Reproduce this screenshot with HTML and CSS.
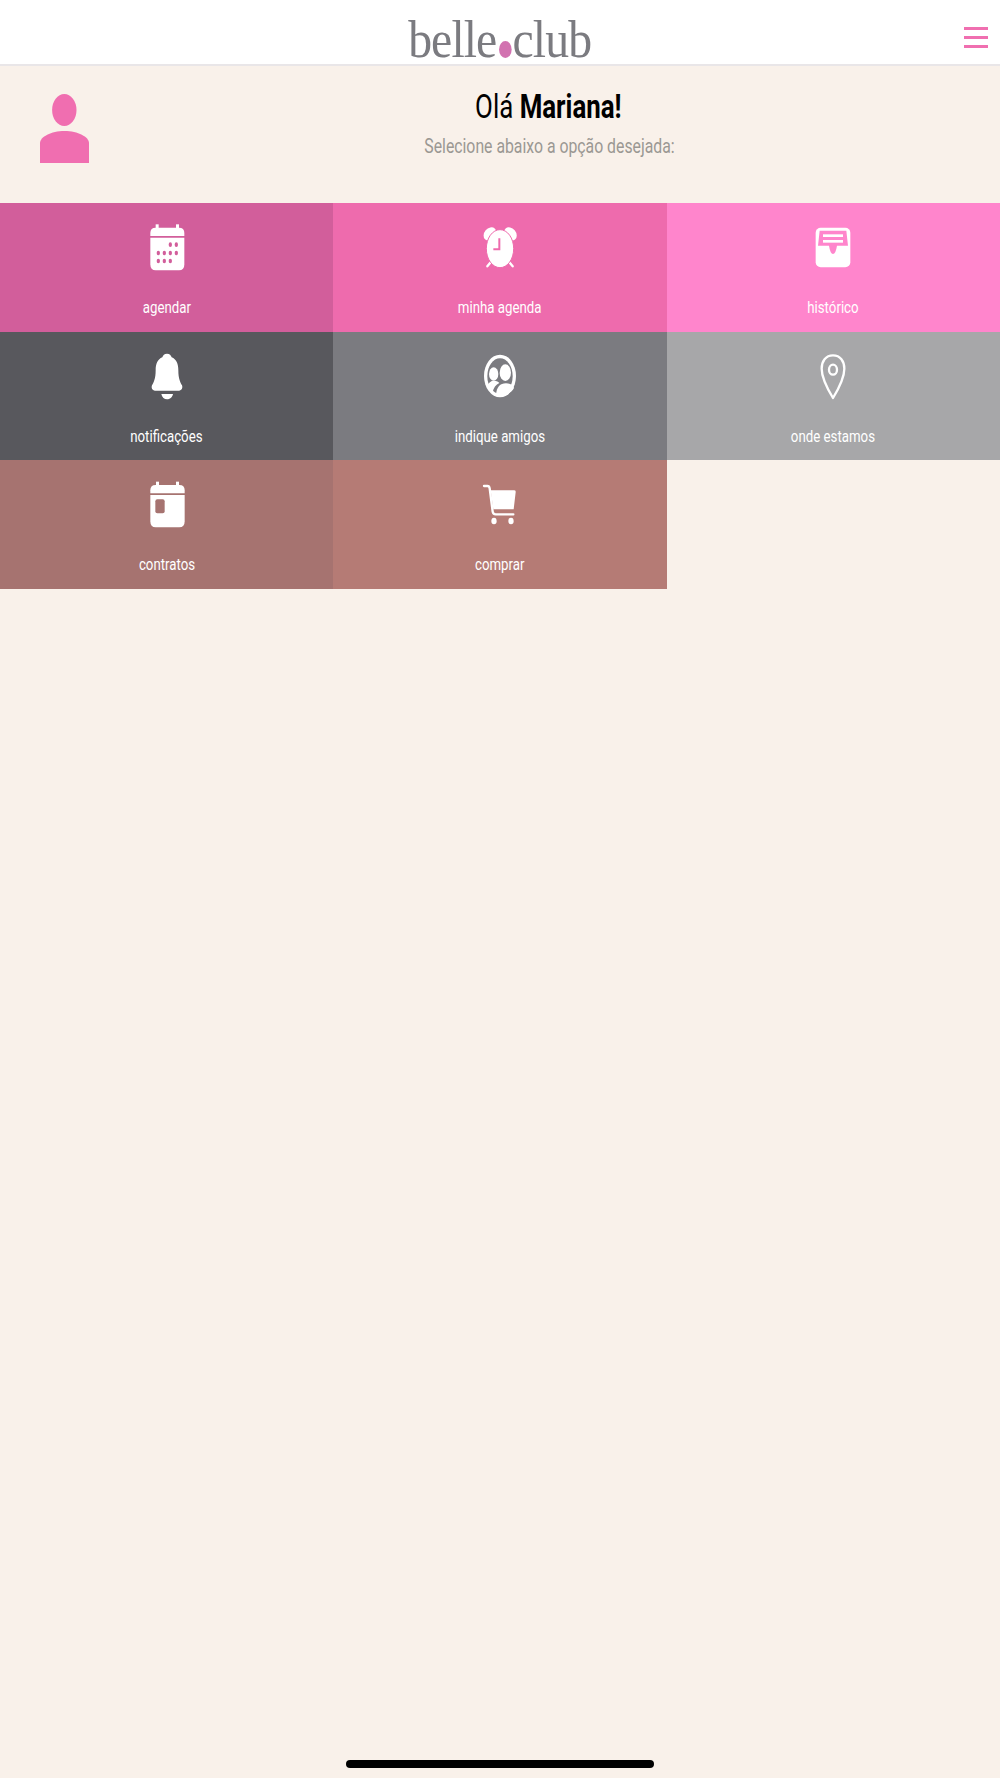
FILE: index.html
```html
<!DOCTYPE html>
<html lang="pt-BR">
<head>
    <meta charset="UTF-8">
    <meta name="viewport" content="width=device-width, initial-scale=1.0">
    <title>belle.club</title>
    <link rel="stylesheet" href="styles.css">
</head>
<body>

<div class="page">
    <header class="topbar">
        <div class="logo"><span class="logo-text">belle</span><span class="logo-dot"></span><span class="logo-text">club</span></div>
        <button class="menu-btn" aria-label="menu"><span></span><span></span><span></span></button>
    </header>

    <section class="hero">
        <svg class="avatar" viewBox="0 0 49 69" aria-hidden="true">
            <ellipse cx="24.3" cy="16" rx="12.2" ry="16"/>
            <path d="M0 69V49C0 43 11 37 24.5 37S49 43 49 49V69Z"/>
        </svg>
        <div class="hero-text">
            <h1 class="greeting"><span class="squeeze-strong">Olá <b>Mariana!</b></span></h1>
            <p class="subtitle"><span class="squeeze">Selecione abaixo a opção desejada:</span></p>
        </div>
    </section>

    <nav class="menu-grid">
        <a class="tile tile-agendar" href="#">
            <svg class="tile-icon" viewBox="110 51 180 156" aria-hidden="true">
                <rect x="166" y="58" width="9" height="16"/>
                <rect x="227" y="58" width="9" height="16"/>
                <path d="M150 93V84Q150 68 166 68H236Q252 68 252 84V93Z"/>
                <path d="M150 98H252V178Q252 196 236 196H166Q150 196 150 178Z"/>
                <g class="cut">
                    <ellipse cx="210" cy="119" rx="5" ry="7"/><ellipse cx="228" cy="119" rx="5" ry="7"/>
                    <ellipse cx="174" cy="144" rx="5" ry="7"/><ellipse cx="192" cy="144" rx="5" ry="7"/><ellipse cx="210" cy="144" rx="5" ry="7"/><ellipse cx="228" cy="144" rx="5" ry="7"/>
                    <ellipse cx="174" cy="168" rx="5" ry="7"/><ellipse cx="192" cy="168" rx="5" ry="7"/><ellipse cx="210" cy="168" rx="5" ry="7"/>
                </g>
            </svg>
            <span class="tile-label">agendar</span>
        </a>
        <a class="tile tile-agenda" href="#">
            <svg class="tile-icon" viewBox="210 51 180 156" aria-hidden="true">
                <ellipse cx="270" cy="87" rx="17" ry="22" transform="rotate(40 270 87)"/>
                <ellipse cx="331" cy="87" rx="17" ry="22" transform="rotate(-40 331 87)"/>
                <line class="line" x1="272" y1="172" x2="262" y2="184"/>
                <line class="line" x1="328" y1="172" x2="338" y2="184"/>
                <ellipse class="ring" cx="300" cy="131" rx="41" ry="57"/>
                <polyline class="hand" points="298,100 298,133 280,133"/>
            </svg>
            <span class="tile-label">minha agenda</span>
        </a>
        <a class="tile tile-historico" href="#">
            <svg class="tile-icon" viewBox="130 51 180 156" aria-hidden="true">
                <rect x="168" y="68" width="104" height="119" rx="15"/>
                <path class="cut" d="M180 77H260L265 122H232Q228 147 220 147T208 122H175Z"/>
                <rect x="190" y="88" width="60" height="8"/>
                <rect x="190" y="105" width="60" height="8"/>
            </svg>
            <span class="tile-label">histórico</span>
        </a>
        <a class="tile tile-notificacoes" href="#">
            <svg class="tile-icon" viewBox="110 47 180 156" aria-hidden="true">
                <path d="M200 55C208 55 212 60 214 66C228 72 234 85 234 105C234 130 240 142 245 150C248 158 244 166 236 166H164C156 166 152 158 155 150C160 142 166 130 166 105C166 85 172 72 186 66C188 60 192 55 200 55Z"/>
                <path d="M183 176H218C216 186 208 192 200 192C192 192 185 186 183 176Z"/>
            </svg>
            <span class="tile-label">notificações</span>
        </a>
        <a class="tile tile-amigos" href="#">
            <svg class="tile-icon" viewBox="210 47 180 156" aria-hidden="true">
                <ellipse cx="300" cy="122" rx="48" ry="64"/>
                <ellipse class="cut" cx="300" cy="122" rx="38" ry="53"/>
                <ellipse cx="281" cy="116" rx="14" ry="20"/>
                <ellipse cx="316" cy="112" rx="17" ry="25"/>
                <path d="M288 178C290 155 300 144 318 144C330 144 340 150 342 158C335 172 318 180 300 180Z"/>
                <path d="M262 152C266 142 272 136 282 136C290 136 296 140 298 143C288 148 280 158 278 170C270 166 265 160 262 152Z"/>
            </svg>
            <span class="tile-label">indique amigos</span>
        </a>
        <a class="tile tile-onde" href="#">
            <svg class="tile-icon" viewBox="130 47 180 156" aria-hidden="true">
                <path class="outline" d="M220 60C242 60 254 78 254 100C254 128 232 168 220 188C208 168 186 128 186 100C186 78 198 60 220 60Z"/>
                <ellipse class="outline" cx="220" cy="103" rx="12" ry="15"/>
            </svg>
            <span class="tile-label">onde estamos</span>
        </a>
        <a class="tile tile-contratos" href="#">
            <svg class="tile-icon" viewBox="110 52 180 156" aria-hidden="true">
                <rect x="167" y="60" width="9" height="16"/>
                <rect x="227" y="60" width="9" height="16"/>
                <path d="M150 95V86Q150 70 166 70H237Q253 70 253 86V95Z"/>
                <path d="M150 100H253V179Q253 197 237 197H166Q150 197 150 179Z"/>
                <rect class="cut" x="165" y="113" width="28" height="42" rx="6"/>
            </svg>
            <span class="tile-label">contratos</span>
        </a>
        <a class="tile tile-comprar" href="#">
            <svg class="tile-icon" viewBox="210 52 180 156" aria-hidden="true">
                <path class="line" d="M252 73H262Q268 73 269 80L278 150Q279 158 287 158H340"/>
                <path d="M272 86H342Q348 86 347 92L341 143H280Z"/>
                <ellipse cx="282" cy="178" rx="8" ry="10"/>
                <ellipse cx="333" cy="178" rx="8" ry="10"/>
            </svg>
            <span class="tile-label">comprar</span>
        </a>
    </nav>

    <div class="home-bar"></div>
</div>

</body>
</html>
```

FILE: styles.css
```css
body {
    font-family: Roboto, "Liberation Sans", sans-serif;
    background-color: #f9f1ea;
    color: #000;
    margin: 0;
    padding: 0;
}

.page {
    display: flex;
    flex-direction: column;
    min-height: 1778px;
    box-sizing: border-box;
}

.topbar {
    display: grid;
    grid-template-columns: 1fr auto 1fr;
    align-items: center;
    height: 64px;
    background-color: #fff;
    border-bottom: 2px solid #e9e6e8;
}

.logo {
    grid-column: 2;
    display: flex;
    align-items: flex-end;
    height: 38px;
    margin-top: 14px;
    color: #7b7b80;
    transform: scaleX(.9);
}

.logo-text {
    font-family: "Liberation Serif", serif;
    font-size: 53px;
    line-height: 38px;
    letter-spacing: -1px;
}

.logo-dot {
    width: 14px;
    height: 17px;
    margin: 0 1px 0 3px;
    border-radius: 50%;
    background-color: #d272b0;
}

.menu-btn {
    grid-column: 3;
    justify-self: end;
    display: flex;
    flex-direction: column;
    gap: 6px;
    width: 24px;
    margin: 10px 12px 0 0;
    padding: 0;
    background: none;
    border: none;
}

.menu-btn span {
    height: 3px;
    background-color: #f06fb0;
}

.hero {
    display: flex;
    height: 137px;
    padding: 28px 0 0 40px;
    box-sizing: border-box;
    gap: 9px;
}

.avatar {
    flex: none;
    width: 49px;
    height: 69px;
    fill: #f06eb0;
}

.hero-text {
    flex: 1;
    text-align: center;
}

.squeeze {
    display: inline-block;
    transform: scaleX(.79);
    white-space: nowrap;
}

.squeeze-strong {
    display: inline-block;
    transform: scaleX(.76);
    white-space: nowrap;
    margin-right: 2px;
}

.greeting {
    margin: -11px 0 0;
    font-size: 34px;
    line-height: 46px;
    font-weight: normal;
}

.greeting b {
    font-weight: bold;
}

.subtitle {
    margin: 2px 0 0;
    font-size: 20px;
    line-height: 30px;
    color: #9b9893;
}

.menu-grid {
    display: grid;
    grid-template-columns: repeat(3, 1fr);
    grid-auto-rows: 128.67px;
}

.tile {
    --tile-bg: #d25e9b;
    display: flex;
    flex-direction: column;
    align-items: center;
    padding-top: 19px;
    box-sizing: border-box;
    background-color: var(--tile-bg);
    color: #fff;
    text-decoration: none;
}

.tile-agendar { --tile-bg: #d25e9b; }
.tile-agenda { --tile-bg: #ee6bad; }
.tile-historico { --tile-bg: #ff85cc; }
.tile-notificacoes { --tile-bg: #58585d; }
.tile-amigos { --tile-bg: #7b7b80; }
.tile-onde { --tile-bg: #a7a7a9; }
.tile-contratos { --tile-bg: #a67370; }
.tile-comprar { --tile-bg: #b57b75; }

.tile-icon {
    width: 60px;
    height: 52px;
    fill: #fff;
}

.tile-icon .cut {
    fill: var(--tile-bg);
}

.tile-icon .line {
    fill: none;
    stroke: #fff;
    stroke-width: 7;
    stroke-linecap: round;
}

.tile-icon .ring {
    stroke: var(--tile-bg);
    stroke-width: 3;
}

.tile-icon .hand {
    fill: none;
    stroke: var(--tile-bg);
    stroke-width: 6;
}

.tile-icon .outline {
    fill: none;
    stroke: #fff;
    stroke-width: 7;
    stroke-linejoin: round;
}

.tile-label {
    margin-top: 21px;
    font-size: 17px;
    line-height: 24px;
    transform: scaleX(.78);
    white-space: nowrap;
}

.home-bar {
    width: 308px;
    height: 8px;
    margin: auto auto 10px;
    border-radius: 4px;
    background-color: #000;
}
```
